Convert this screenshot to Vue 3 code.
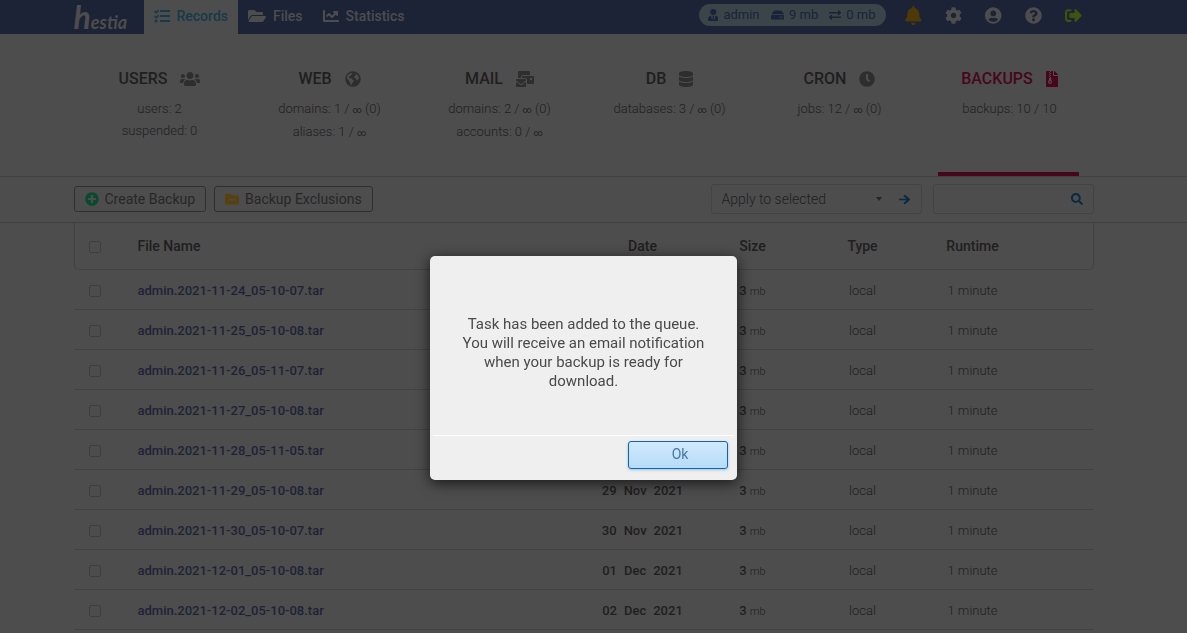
<script setup>
import { ref } from 'vue'

const icons = {
  tasks: { box: '0 0 512 512', d: 'M140 64a14 14 0 0 0-20 0L72 114 46 88a14 14 0 0 0-20 0L12 104a14 14 0 0 0 0 20l48 48a16 16 0 0 0 22 0l16-16 64-62a14 14 0 0 0 0-18zm0 160a14 14 0 0 0-20 0l-48 50-26-26a14 14 0 0 0-20 0l-14 16a14 14 0 0 0 0 20l48 48a16 16 0 0 0 22 0l80-78a14 14 0 0 0 0-18zM64 368a48 48 0 1 0 0 96 48 48 0 0 0 0-96zm432 16H208a16 16 0 0 0-16 16v32a16 16 0 0 0 16 16h288a16 16 0 0 0 16-16v-32a16 16 0 0 0-16-16zm0-320H208a16 16 0 0 0-16 16v32a16 16 0 0 0 16 16h288a16 16 0 0 0 16-16V80a16 16 0 0 0-16-16zm0 160H208a16 16 0 0 0-16 16v32a16 16 0 0 0 16 16h288a16 16 0 0 0 16-16v-32a16 16 0 0 0-16-16z' },
  folderOpen: { box: '0 0 576 512', d: 'M572.694 292.093L500.27 416.248A63.997 63.997 0 0 1 444.989 448H45.025c-18.523 0-30.064-20.093-20.731-36.093l72.424-124.155A64 64 0 0 1 152 256h399.964c18.523 0 30.064 20.093 20.73 36.093zM152 224h328v-48c0-26.51-21.49-48-48-48H272l-64-64H48C21.49 64 0 85.49 0 112v278.046l69.077-118.418C86.214 242.25 117.989 224 152 224z' },
  chart: { box: '0 0 512 512', d: 'M496 384H64V80c0-8.84-7.16-16-16-16H16C7.16 64 0 71.16 0 80v336c0 17.67 14.33 32 32 32h464c8.84 0 16-7.16 16-16v-32c0-8.84-7.16-16-16-16zM464 96H345.94c-21.38 0-32.09 25.85-16.97 40.97l32.4 32.4L288 242.75l-73.37-73.37c-12.5-12.5-32.76-12.5-45.25 0l-68.69 68.69c-6.25 6.25-6.25 16.38 0 22.63l22.62 22.62c6.25 6.25 16.38 6.25 22.63 0L192 237.25l73.37 73.37c12.5 12.5 32.76 12.5 45.25 0l96-96 32.4 32.4c15.12 15.12 40.97 4.41 40.97-16.97V112c.01-8.84-7.15-16-15.99-16z' },
  userTie: { box: '0 0 448 512', d: 'M224 256a128 128 0 1 0 0-256 128 128 0 0 0 0 256zm96 33-48 191-32-136 32-56h-96l32 56-32 136-48-191C57 292 0 350 0 422v42a48 48 0 0 0 48 48h352a48 48 0 0 0 48-48v-42c0-72-57-130-128-133z' },
  drive: { box: '0 0 576 512', d: 'M576 304v96c0 26.51-21.49 48-48 48H48c-26.51 0-48-21.49-48-48v-96c0-26.51 21.49-48 48-48h480c26.51 0 48 21.49 48 48zm-48-80a79.557 79.557 0 0 1 30.777 6.165L462.25 85.374A48.003 48.003 0 0 0 422.311 64H153.689a48 48 0 0 0-39.938 21.374L17.223 230.165A79.557 79.557 0 0 1 48 224h480zm-48 96a32 32 0 1 0 0 64 32 32 0 0 0 0-64zm-96 0a32 32 0 1 0 0 64 32 32 0 0 0 0-64z' },
  exchange: { box: '0 0 512 512', d: 'M0 168v-16c0-13.3 10.7-24 24-24h360V80c0-21.4 25.9-32 41-17l80 80c9.4 9.4 9.4 24.6 0 34l-80 80c-15 15-41 4.5-41-17v-48H24c-13.3 0-24-10.7-24-24zm488 152H128v-48c0-21.3-25.9-32-41-17l-80 80c-9.4 9.4-9.4 24.6 0 34l80 80c15.1 15.1 41 4.4 41-17v-48h360c13.3 0 24-10.7 24-24v-16c0-13.3-10.7-24-24-24z' },
  bell: { box: '0 0 448 512', d: 'M224 512c35.32 0 63.97-28.65 63.97-64H160.03c0 35.35 28.65 64 63.97 64zm215.39-149.71c-19.32-20.76-55.47-51.99-55.47-154.29 0-77.7-54.48-139.9-127.94-155.16V32c0-17.67-14.32-32-31.98-32s-31.98 14.33-31.98 32v20.84C118.56 68.1 64.08 130.3 64.08 208c0 102.3-36.15 133.53-55.47 154.29-6 6.45-8.66 14.16-8.61 21.71.11 16.4 12.98 32 32.1 32h383.8c19.12 0 32-15.6 32.1-32 .05-7.55-2.61-15.27-8.61-21.71z' },
  cog: { box: '0 0 512 512', d: 'M487.4 315.7l-42.6-24.6c4.3-23.2 4.3-47 0-70.2l42.6-24.6c4.9-2.8 7.1-8.6 5.5-14-11.1-35.6-30-67.8-54.7-94.6-3.8-4.1-10-5.1-14.8-2.3L380.8 110c-17.9-15.4-38.5-27.3-60.8-35.1V25.8c0-5.6-3.9-10.5-9.4-11.7-36.7-8.2-74.3-7.8-109.2 0-5.5 1.2-9.4 6.1-9.4 11.7V75c-22.2 7.9-42.8 19.8-60.8 35.1L88.7 85.5c-4.9-2.8-11-1.9-14.8 2.3-24.7 26.7-43.6 58.9-54.7 94.6-1.7 5.4.6 11.2 5.5 14L67.3 221c-4.3 23.2-4.3 47 0 70.2l-42.6 24.6c-4.9 2.8-7.1 8.6-5.5 14 11.1 35.6 30 67.8 54.7 94.6 3.8 4.1 10 5.1 14.8 2.3l42.6-24.6c17.9 15.4 38.5 27.3 60.8 35.1v49.2c0 5.6 3.9 10.5 9.4 11.7 36.7 8.2 74.3 7.8 109.2 0 5.5-1.2 9.4-6.1 9.4-11.7v-49.2c22.2-7.9 42.8-19.8 60.8-35.1l42.6 24.6c4.9 2.8 11 1.9 14.8-2.3 24.7-26.7 43.6-58.9 54.7-94.6 1.5-5.5-.7-11.3-5.6-14.1zM256 336c-44.1 0-80-35.9-80-80s35.9-80 80-80 80 35.9 80 80-35.9 80-80 80z' },
  account: { box: '0 0 496 512', d: 'M248 8C111 8 0 119 0 256s111 248 248 248 248-111 248-248S385 8 248 8zm0 96c48.6 0 88 39.4 88 88s-39.4 88-88 88-88-39.4-88-88 39.4-88 88-88zm0 344c-58.7 0-111.3-26.6-146.5-68.2 18.8-35.4 55.6-59.8 98.5-59.8 2.4 0 4.8.4 7.1 1.1 13 4.2 26.6 6.9 40.9 6.9 14.3 0 28-2.7 40.9-6.9 2.3-.7 4.7-1.1 7.1-1.1 42.9 0 79.7 24.4 98.5 59.8C359.3 421.4 306.7 448 248 448z' },
  help: { box: '0 0 512 512', d: 'M504 256c0 136.997-111.043 248-248 248S8 392.997 8 256C8 119.083 119.043 8 256 8s248 111.083 248 248zM262.655 90c-54.497 0-89.255 22.957-116.549 63.758-3.536 5.286-2.353 12.415 2.715 16.258l34.699 26.31c5.205 3.947 12.621 3.008 16.665-2.122 17.864-22.658 30.113-35.797 57.303-35.797 20.429 0 45.698 13.148 45.698 32.958 0 14.976-12.363 22.667-32.534 33.976C247.128 238.528 216 254.941 216 296v4c0 6.627 5.373 12 12 12h56c6.627 0 12-5.373 12-12v-1.333c0-28.462 83.186-29.647 83.186-106.667 0-58.002-60.165-102-116.531-102zM256 338c-25.365 0-46 20.635-46 46 0 25.364 20.635 46 46 46s46-20.636 46-46c0-25.365-20.635-46-46-46z' },
  signOut: { box: '0 0 512 512', d: 'M497 273L329 441c-15 15-41 4.5-41-17v-96H152c-13.3 0-24-10.7-24-24v-96c0-13.3 10.7-24 24-24h136V88c0-21.4 25.9-32 41-17l168 168c9.3 9.4 9.3 24.6 0 34zM192 436v-40c0-6.6-5.4-12-12-12H96c-17.7 0-32-14.3-32-32V160c0-17.7 14.3-32 32-32h84c6.6 0 12-5.4 12-12V76c0-6.6-5.4-12-12-12H96c-53 0-96 43-96 96v192c0 53 43 96 96 96h84c6.6 0 12-5.4 12-12z' },
  users: { box: '0 0 640 512', d: 'M96 224c35.3 0 64-28.7 64-64s-28.7-64-64-64-64 28.7-64 64 28.7 64 64 64zm448 0c35.3 0 64-28.7 64-64s-28.7-64-64-64-64 28.7-64 64 28.7 64 64 64zm32 32h-64c-17.6 0-33.5 7.1-45.1 18.6 40.3 22.1 68.9 62 75.1 109.4h66c17.7 0 32-14.3 32-32v-32c0-35.3-28.7-64-64-64zm-256 0c61.9 0 112-50.1 112-112S381.9 32 320 32 208 82.1 208 144s50.1 112 112 112zm76.8 32h-8.3c-20.8 10-43.9 16-68.5 16s-47.6-6-68.5-16h-8.3C179.6 288 128 339.6 128 403.2V432c0 26.5 21.5 48 48 48h288c26.5 0 48-21.5 48-48v-28.8c0-63.6-51.6-115.2-115.2-115.2zm-223.7-13.4C161.5 263.1 145.6 256 128 256H64c-35.3 0-64 28.7-64 64v32c0 17.7 14.3 32 32 32h65.9c6.3-47.4 34.9-87.3 75.2-109.4z' },
  globe: { box: '0 0 512 512', d: 'M256 8a248 248 0 1 0 0 496 248 248 0 0 0 0-496zM90 130l60-48 58-14 34 20-20 32-42 14-12 36-36 12-8 30 38 20 48 6 34 40 38 12-10 42-36 32-18 54-24 36-24-28-8-66-34-34-6-42-44-24-18-50zm246-40 56 26 44 60 14 62-30 18-18 38-34-10-12-44-38-12-26-42 30-40 30-10z' },
  mail: { box: '0 0 576 512', d: 'M160 448c-25.6 0-51.2-22.4-64-32-64-44.8-83.2-60.8-96-70.4V480c0 17.67 14.33 32 32 32h256c17.67 0 32-14.33 32-32V345.6c-12.8 9.6-32 25.6-96 70.4-12.8 9.6-38.4 32-64 32zm128-192H32c-17.67 0-32 14.33-32 32v16c25.6 19.2 22.4 19.2 115.2 86.4 9.6 6.4 28.8 25.6 44.8 25.6s35.2-19.2 44.8-22.4c92.8-67.2 89.6-67.2 115.2-86.4V288c0-17.67-14.33-32-32-32zm256-96H224c-17.67 0-32 14.33-32 32v32h96c33.21 0 60.59 25.42 63.71 57.82l.29-.22V416h192c17.67 0 32-14.33 32-32V192c0-17.67-14.33-32-32-32zm-32 128h-64v-64h64v64zm-352-96c0-35.29 28.71-64 64-64h224V32c0-17.67-14.33-32-32-32H96C78.33 0 64 14.33 64 32v192h96v-32z' },
  database: { box: '0 0 448 512', d: 'M448 73.143v45.714C448 159.143 347.667 192 224 192S0 159.143 0 118.857V73.143C0 32.857 100.333 0 224 0s224 32.857 224 73.143zM448 176v102.857C448 319.143 347.667 352 224 352S0 319.143 0 278.857V176c48.125 33.143 136.208 48.572 224 48.572S399.874 209.143 448 176zm0 160v102.857C448 479.143 347.667 512 224 512S0 479.143 0 438.857V336c48.125 33.143 136.208 48.572 224 48.572S399.874 369.143 448 336z' },
  clock: { box: '0 0 512 512', d: 'M256,8C119,8,8,119,8,256S119,504,256,504,504,393,504,256,393,8,256,8Zm92.49,313h0l-20,25a16,16,0,0,1-22.49,2.5h0l-67-49.72a40,40,0,0,1-15-31.23V112a16,16,0,0,1,16-16h32a16,16,0,0,1,16,16V256l58,42.5A16,16,0,0,1,348.49,321Z' },
  archive: { box: '0 0 384 512', d: 'M377 105 279 7a24 24 0 0 0-17-7h-6v128h128v-6a24 24 0 0 0-7-17zM224 136V0h-64v32h-32V0H24A24 24 0 0 0 0 24v464a24 24 0 0 0 24 24h336a24 24 0 0 0 24-24V160H248a24 24 0 0 1-24-24zM96 32h32v32H96zm32 32h32v32h-32zM96 96h32v32H96zm32 32h32v32h-32zM96 160h32v32H96zm32 32h32v32h-32zm-1 32h34l26 118a60 60 0 1 1-118 0l27-86v-32zm2 100a32 26 0 1 0 0 52 32 26 0 0 0 0-52z' },
  plus: { box: '0 0 512 512', d: 'M256 8C119 8 8 119 8 256s111 248 248 248 248-111 248-248S393 8 256 8zm144 276c0 6.6-5.4 12-12 12h-92v92c0 6.6-5.4 12-12 12h-56c-6.6 0-12-5.4-12-12v-92h-92c-6.6 0-12-5.4-12-12v-56c0-6.6 5.4-12 12-12h92v-92c0-6.6 5.4-12 12-12h56c6.6 0 12 5.4 12 12v92h92c6.6 0 12 5.4 12 12v56z' },
  folderMinus: { box: '0 0 512 512', d: 'M464 128H272l-64-64H48C21.49 64 0 85.49 0 112v288c0 26.51 21.49 48 48 48h416c26.51 0 48-21.49 48-48V176c0-26.51-21.49-48-48-48zm-96 168c0 8.84-7.16 16-16 16H160c-8.84 0-16-7.16-16-16v-16c0-8.84 7.16-16 16-16h192c8.84 0 16 7.16 16 16v16z' },
  arrow: { box: '0 0 448 512', d: 'M190 101l23-22a24 24 0 0 1 34 0l194 160a24 24 0 0 1 0 34L247 433a24 24 0 0 1-34 0l-23-22a24 24 0 0 1 1-34l110-89H24a24 24 0 0 1-24-24v-16a24 24 0 0 1 24-24h277l-110-89a24 24 0 0 1-1-34z' },
  search: { box: '0 0 512 512', d: 'M505 442.7L405.3 343c-4.5-4.5-10.6-7-17-7H372c27.6-35.3 44-79.7 44-128C416 93.1 322.9 0 208 0S0 93.1 0 208s93.1 208 208 208c48.3 0 92.7-16.4 128-44v16.3c0 6.4 2.5 12.5 7 17l99.7 99.7c9.4 9.4 24.6 9.4 33.9 0l28.3-28.3c9.4-9.4 9.4-24.6.1-34zM208 336c-70.7 0-128-57.2-128-128 0-70.7 57.2-128 128-128 70.7 0 128 57.2 128 128 0 70.7-57.2 128-128 128z' },
}

const tabs = [
  { label: 'Records', icon: 'tasks', active: true },
  { label: 'Files', icon: 'folderOpen' },
  { label: 'Statistics', icon: 'chart' },
]
const usage = [
  { text: 'admin', icon: 'userTie' },
  { text: '9 mb', icon: 'drive' },
  { text: '0 mb', icon: 'exchange' },
]
const actions = [
  { label: 'Notifications', icon: 'bell', tone: 'amber' },
  { label: 'Settings', icon: 'cog' },
  { label: 'Account', icon: 'account' },
  { label: 'Help', icon: 'help' },
  { label: 'Log out', icon: 'signOut', tone: 'lime' },
]
const stats = [
  { title: 'USERS', icon: 'users', lines: [['users: 2'], ['suspended: 0']] },
  { title: 'WEB', icon: 'globe', lines: [['domains: 1 / ', ' (0)'], ['aliases: 1 / ', '']] },
  { title: 'MAIL', icon: 'mail', lines: [['domains: 2 / ', ' (0)'], ['accounts: 0 / ', '']] },
  { title: 'DB', icon: 'database', lines: [['databases: 3 / ', ' (0)']] },
  { title: 'CRON', icon: 'clock', lines: [['jobs: 12 / ', ' (0)']] },
  { title: 'BACKUPS', icon: 'archive', lines: [['backups: 10 / 10']], active: true },
]
const backups = [
  ['24', 'Nov', '2021-11-24_05-10-07'],
  ['25', 'Nov', '2021-11-25_05-10-08'],
  ['26', 'Nov', '2021-11-26_05-11-07'],
  ['27', 'Nov', '2021-11-27_05-10-08'],
  ['28', 'Nov', '2021-11-28_05-11-05'],
  ['29', 'Nov', '2021-11-29_05-10-08'],
  ['30', 'Nov', '2021-11-30_05-10-07'],
  ['01', 'Dec', '2021-12-01_05-10-08'],
  ['02', 'Dec', '2021-12-02_05-10-08'],
].map(([day, month, stamp]) => ({ day, month, name: `admin.${stamp}.tar` }))

const dialogOpen = ref(true)
</script>

<template>
  <div class="page">
    <header class="topbar">
      <div class="inner topbar-inner">
        <a class="logo" href="#" aria-label="hestia"><span class="logo-h">h</span><span>estia</span></a>
        <nav class="tabs">
          <a v-for="t in tabs" :key="t.label" href="#" class="tab" :class="{ active: t.active }">
            <svg class="icon" :viewBox="icons[t.icon].box"><path :d="icons[t.icon].d" /></svg>{{ t.label }}
          </a>
        </nav>
        <div class="usage">
          <span v-for="u in usage" :key="u.text" class="usage-item">
            <svg class="icon" :viewBox="icons[u.icon].box"><path :d="icons[u.icon].d" /></svg>{{ u.text }}
          </span>
        </div>
        <div class="actions">
          <a v-for="a in actions" :key="a.label" href="#" class="action" :class="a.tone" :aria-label="a.label">
            <svg class="icon" :viewBox="icons[a.icon].box"><path :d="icons[a.icon].d" /></svg>
          </a>
        </div>
      </div>
    </header>

    <section class="stats">
      <div class="inner stats-grid">
        <a v-for="s in stats" :key="s.title" href="#" class="stat" :class="{ active: s.active }">
          <span class="stat-title">{{ s.title }}<svg class="icon" :viewBox="icons[s.icon].box"><path fill-rule="evenodd" :d="icons[s.icon].d" /></svg></span>
          <span v-for="line in s.lines" :key="line[0]" class="stat-line">{{ line[0] }}<b v-if="line.length > 1">∞</b>{{ line[1] }}</span>
        </a>
      </div>
    </section>

    <section class="toolbar">
      <div class="inner toolbar-inner">
        <button type="button" class="tool green"><svg class="icon" :viewBox="icons.plus.box"><path :d="icons.plus.d" /></svg>Create Backup</button>
        <button type="button" class="tool gold"><svg class="icon" :viewBox="icons.folderMinus.box"><path :d="icons.folderMinus.d" /></svg>Backup Exclusions</button>
        <form class="bulk" @submit.prevent>
          <select aria-label="Apply to selected"><option>Apply to selected</option><option>Delete</option></select>
          <svg class="caret" viewBox="0 0 6 4"><path d="M0 0h6L3 4z" /></svg>
          <button type="submit" aria-label="Apply"><svg class="icon" :viewBox="icons.arrow.box"><path :d="icons.arrow.d" /></svg></button>
        </form>
        <form class="search" @submit.prevent>
          <input type="search" aria-label="Search" />
          <button type="submit" aria-label="Search"><svg class="icon" :viewBox="icons.search.box"><path :d="icons.search.d" /></svg></button>
        </form>
      </div>
    </section>

    <main class="inner">
      <table>
        <colgroup><col class="c-check" /><col /><col class="c-data" /><col class="c-data" /><col class="c-data" /><col class="c-data" /><col class="c-end" /></colgroup>
        <thead>
          <tr>
            <th class="check"><input type="checkbox" aria-label="Select all" /></th>
            <th class="name">File Name</th><th>Date</th><th>Size</th><th>Type</th><th>Runtime</th><th></th>
          </tr>
        </thead>
        <tbody>
          <tr v-for="b in backups" :key="b.name">
            <td class="check"><input type="checkbox" :aria-label="b.name" /></td>
            <td class="name"><a href="#">{{ b.name }}</a></td>
            <td class="date"><span>{{ b.day }}</span><span>{{ b.month }}</span><span>2021</span></td>
            <td><b>3</b> <small>mb</small></td>
            <td>local</td>
            <td>1 minute</td>
            <td></td>
          </tr>
        </tbody>
      </table>
    </main>

    <div v-if="dialogOpen" class="overlay">
      <div class="dialog" role="alertdialog" aria-modal="true" aria-describedby="dialog-text">
        <p id="dialog-text">Task has been added to the queue. You will receive an email notification when your backup is ready for download.</p>
        <div class="dialog-foot"><button type="button" @click="dialogOpen = false">Ok</button></div>
      </div>
    </div>
  </div>
</template>

<style>
body { background: #4d4d4d; }
</style>

<style scoped>
* { box-sizing: border-box; }
.page {
  min-height: 100vh;
  background: #4d4d4d;
  color: #1f1f1f;
  font: 13px/20px Roboto, "Liberation Sans", sans-serif;
}
a { color: inherit; text-decoration: none; }
button, input, select { font: inherit; color: inherit; margin: 0; }
button { cursor: pointer; }
.icon { display: block; height: 16px; fill: currentColor; flex: none; }
.topbar, .stats, .toolbar { padding-right: 20px; }
.inner { max-width: 1020px; margin: 0 auto; }
main.inner { max-width: 1040px; padding-right: 20px; }

.topbar { background: #1c2337; color: #4d4d4d; }
.topbar-inner { display: flex; height: 34px; }
.logo { display: flex; align-items: baseline; width: 70px; font-family: Lato, sans-serif; font-size: 18px; font-style: italic; font-weight: 700; line-height: 34px; }
.logo-h { font-size: 32px; }
.tabs { display: flex; font-size: 14px; font-weight: 500; }
.tab { display: flex; align-items: center; gap: 7px; padding: 0 10px 3px; }
.tab.active { background: #4d4d4d; color: #17394b; }
.usage { display: flex; align-items: center; gap: 11px; height: 22px; margin: 4px 8px 0 auto; padding: 0 10px 0 9px; border-radius: 11px; background: #3a4449; color: #17243a; }
.usage-item { display: flex; align-items: center; gap: 5px; }
.usage .icon { height: 12px; }
.actions { display: flex; height: 30px; }
.action { display: grid; place-items: center; width: 40px; }
.action .icon { height: 17px; }
.action:first-child .icon { height: 19px; }
.amber { color: #4d3a08; }
.lime { color: #3f5310; }

.stats { border-bottom: 1px solid #404040; }
.stats-grid { display: grid; grid-template-columns: repeat(6, 1fr); height: 142px; }
.stat { position: relative; padding: 34px 0 0 2px; text-align: center; font-weight: 300; line-height: 22px; }
.stat-title { display: flex; justify-content: center; align-items: center; gap: 13px; margin-bottom: 8px; font-size: 16px; font-weight: 500; }
.stat-title .icon { color: #2e2e2e; }
.stat-line { display: block; }
.stat-line b { font-size: 9px; }
.stat.active .stat-title, .stat.active .icon { color: #47061c; }
.stat.active::after { content: ""; position: absolute; left: 14px; right: 15px; bottom: 0; height: 4px; background: #47061c; }

.toolbar { border-bottom: 1px solid #404040; }
.toolbar-inner { display: flex; height: 45px; gap: 8px; padding-top: 7px; }
.tool { display: flex; align-items: center; gap: 6px; height: 26px; margin-top: 2px; padding: 0 10px 1px; border: 1px solid #2f2f2f; border-radius: 3px; background: none; color: #272727; font-size: 14px; }
.tool .icon { height: 14px; }
.tool.green .icon { color: #0b4a30; }
.tool.gold .icon { color: #57420f; }
.bulk, .search { display: flex; align-items: center; height: 30px; border: 1px solid #434343; border-radius: 3px; }
.bulk { width: 211px; margin-left: auto; margin-right: 3px; }
.bulk select { flex: 1; min-width: 0; padding: 0 0 0 10px; border: 0; background: none; appearance: none; font-size: 14px; font-weight: 300; }
.caret { width: 6px; height: 4px; fill: #262626; }
.bulk button, .search button { display: grid; place-items: center; height: 28px; padding: 0; border: 0; background: none; color: #0a2a43; }
.bulk button { width: 32px; margin-left: 7px; }
.bulk .icon { height: 13px; }
.search { width: 161px; }
.search input { flex: 1; min-width: 0; border: 0; background: none; outline: 0; }
.search button { width: 32px; }
.search .icon { height: 12px; }

table { width: 100%; table-layout: fixed; border-collapse: separate; border-spacing: 0; }
.c-check { width: 64px; }
.c-data { width: 110px; }
.c-end { width: 66px; }
th, td { height: 40px; padding: 2px 0 0; border-bottom: 1px solid #424242; text-align: center; }
th { height: 47px; padding-top: 0; font-size: 14px; font-weight: 500; }
th:first-child { border-left: 1px solid #404040; border-bottom-left-radius: 5px; }
th:last-child { border-right: 1px solid #404040; border-bottom-right-radius: 5px; }
td { font-weight: 300; }
th.name, td.name { text-align: left; }
th.check { padding: 2px 0 0 14px; }
td.check { padding-left: 15px; }
.check input { display: block; width: 12px; height: 12px; appearance: none; border: 1px solid #3e3e3e; border-radius: 2px; }
td.name a { font-weight: 500; color: #1d2337; }
.date span { font-weight: 500; }
.date span + span { margin-left: 7px; }
td b { font-weight: 500; }
small { font-size: 11px; line-height: 12px; }

.overlay { position: fixed; inset: 0; display: flex; justify-content: center; align-items: flex-start; padding: 256px 20px 0 0; }
.dialog { width: 307px; border-radius: 5px; background: #efefef; box-shadow: 0 3px 14px rgba(0, 0, 0, .7); color: #4a4a4a; }
.dialog p { margin: 0; padding: 59px 32px 44px; text-align: center; font-size: 15px; line-height: 19px; }
.dialog-foot { margin: 0 3px; padding: 5px 6px 11px; border-top: 1px solid #fff; display: flex; justify-content: flex-end; }
.dialog-foot button { width: 100px; height: 28px; padding: 0 0 2px 4px; border: 1px solid #1363a8; border-radius: 3px; background: linear-gradient(#d0e9fc, #b6dcf8); box-shadow: 0 1px 3px #9fc4e0; color: #4875a5; font-size: 14px; }
</style>
